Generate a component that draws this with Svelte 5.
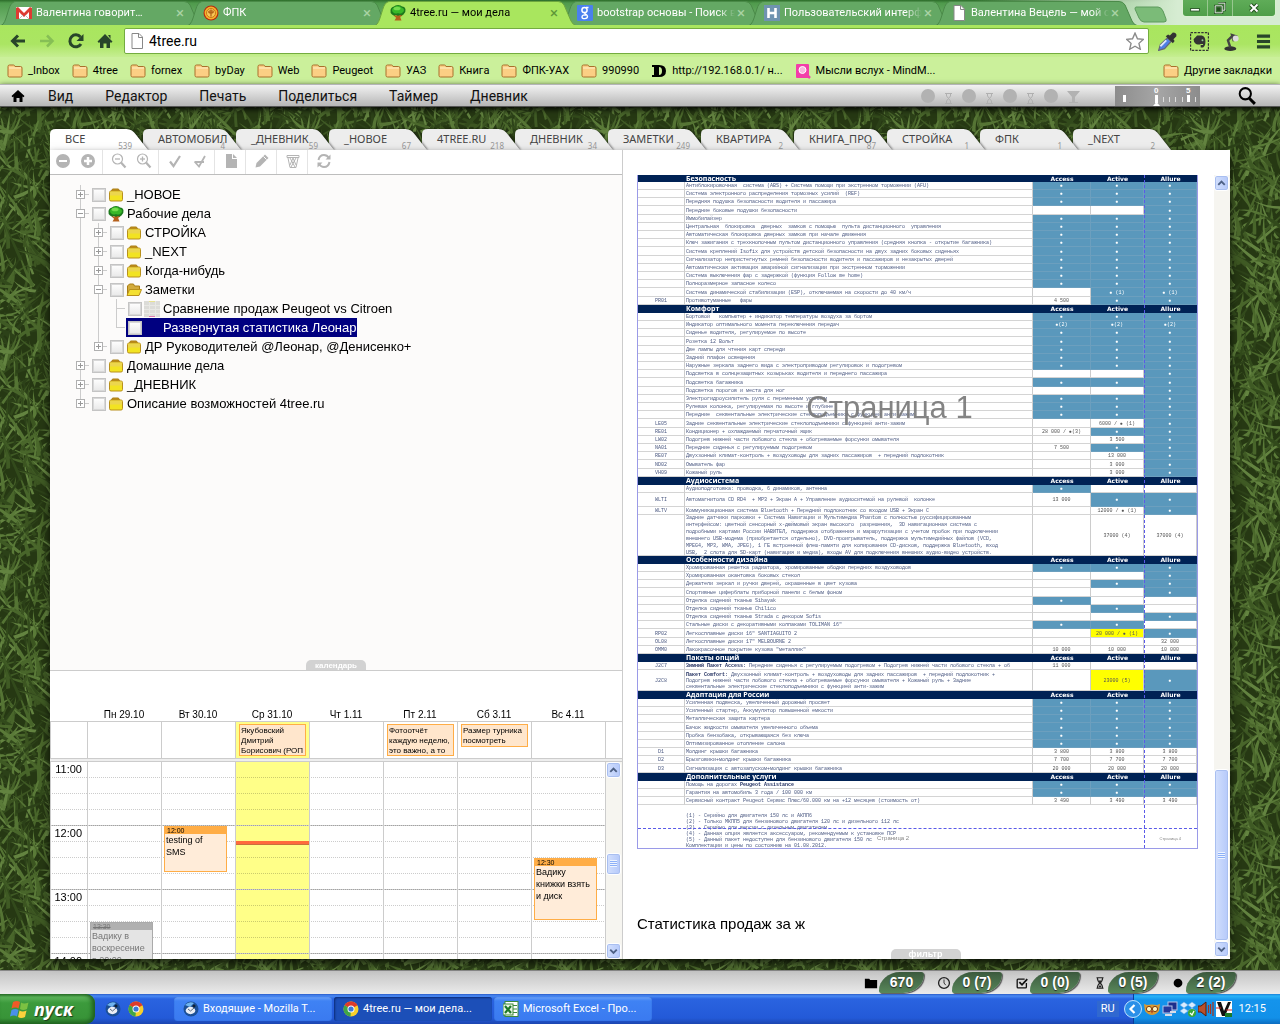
<script>
  const browserTabs = [
    { icon: 'gmail', title: 'Валентина говорит…' },
    { icon: 'coin', title: 'ФПК' },
    { icon: 'tree', title: '4tree.ru — мои дела', active: true },
    { icon: 'google', title: 'bootstrap основы - Поиск в' },
    { icon: 'habr', title: 'Пользовательский интерф' },
    { icon: 'page', title: 'Валентина Вецель — мой са' }
  ];

  const bookmarks = [
    { icon: 'folder', title: '_Inbox' },
    { icon: 'folder', title: '4tree' },
    { icon: 'folder', title: 'fornex' },
    { icon: 'folder', title: 'byDay' },
    { icon: 'folder', title: 'Web' },
    { icon: 'folder', title: 'Peugeot' },
    { icon: 'folder', title: 'УАЗ' },
    { icon: 'folder', title: 'Книга' },
    { icon: 'folder', title: 'ФПК-УАХ' },
    { icon: 'folder', title: '990990' },
    { icon: 'dlink', title: 'http://192.168.0.1/ н...' },
    { icon: 'mind', title: 'Мысли вслух - MindM...' }
  ];

  const menu = ['Вид', 'Редактор', 'Печать', 'Поделиться', 'Таймер', 'Дневник'];

  const folders = [
    ['ВСЕ', 539], ['АВТОМОБИЛ', 4], ['_ДНЕВНИК', 59], ['_НОВОЕ', 67],
    ['4TREE.RU', 218], ['ДНЕВНИК', 34], ['ЗАМЕТКИ', 249], ['КВАРТИРА', 2],
    ['КНИГА_ПРО', 87], ['СТРОЙКА', 1], ['ФПК', 1], ['_NEXT', 2]
  ];

  const tools = [['minus', 'plus'], ['zoomout', 'zoomin'], ['check', 'checkdash'], ['file'], ['pencil'], ['trash'], ['refresh']];

  const tree = [
    { depth: 0, toggle: '+', icon: 'yfolder', text: '_НОВОЕ' },
    { depth: 0, toggle: '-', icon: 'tree', text: 'Рабочие дела' },
    { depth: 1, toggle: '+', icon: 'yfolder', text: 'СТРОЙКА' },
    { depth: 1, toggle: '+', icon: 'yfolder', text: '_NEXT' },
    { depth: 1, toggle: '+', icon: 'yfolder', text: 'Когда-нибудь' },
    { depth: 1, toggle: '-', icon: 'yopen', text: 'Заметки' },
    { depth: 2, icon: 'thumb', text: 'Сравнение продаж Peugeot vs Citroen' },
    { depth: 2, icon: 'none', text: 'Развернутая статистика Леонар', selected: true, last: true },
    { depth: 1, toggle: '+', icon: 'yfolder', text: 'ДР Руководителей @Леонар, @Денисенко+', last: true },
    { depth: 0, toggle: '+', icon: 'yfolder', text: 'Домашние дела' },
    { depth: 0, toggle: '+', icon: 'yfolder', text: '_ДНЕВНИК' },
    { depth: 0, toggle: '+', icon: 'yfolder', text: 'Описание возможностей 4tree.ru', last: true }
  ];

  const slot = 16;
  const days = [
    { name: 'Пн 29.10', events: [{ at: 10, len: 4, time: '13:30', text: 'Вадику в воскресение в 20:00', done: true }] },
    { name: 'Вт 30.10', events: [{ at: 4, len: 3, time: '12:00', text: 'testing of SMS' }] },
    { name: 'Ср 31.10', today: true, allDay: 'Якубовский\nДмитрий\nБорисович (РОП', events: [] },
    { name: 'Чт 1.11', events: [] },
    { name: 'Пт 2.11', allDay: 'Фотоотчёт\nкаждую неделю,\nэто важно, а то', events: [] },
    { name: 'Сб 3.11', allDay: 'Размер турника\nпосмотреть', events: [] },
    { name: 'Вс 4.11', events: [{ at: 6, len: 4, time: '12:30', text: 'Вадику книжки взять и диск' }] }
  ];
  const hours = ['11:00', '12:00', '13:00', '14:00'];

  // Cell codes: "*" is included as standard, "" is not offered, a leading "!" marks a highlighted price.
  const sections = [
    { title: 'Безопасность', rows: [
      ['', 'Антиблокировочная  система (ABS) + Система помощи при экстренном торможении (AFU)', '*', '*', '*'],
      ['', 'Система электронного распределения тормозных усилий  (REF)', '*', '*', '*'],
      ['', 'Передняя подушка безопасности водителя и пассажира', '*', '*', '*'],
      ['', 'Передние боковые подушки безопасности', '', '', '*'],
      ['', 'Иммобилайзер', '*', '*', '*'],
      ['', 'Центральная  блокировка  дверных  замков с помощью  пульта дистанционного  управления', '*', '*', '*'],
      ['', 'Автоматическая блокировка дверных замков при начале движения', '*', '*', '*'],
      ['', 'Ключ зажигания с трехкнопочным пультом дистанционного управления (средняя кнопка - открытие багажника)', '*', '*', '*'],
      ['', 'Система креплений Isofix для устройств детской безопасности на двух задних боковых сиденьях', '*', '*', '*'],
      ['', 'Сигнализатор непристегнутых ремней безопасности водителя и пассажиров и незакрытых дверей', '*', '*', '*'],
      ['', 'Автоматическая активация аварийной сигнализации при экстренном торможении', '*', '*', '*'],
      ['', 'Система выключения фар с задержкой (функция Follow me home)', '*', '*', '*'],
      ['', 'Полноразмерное запасное колесо', '*', '*', '*'],
      ['', 'Система динамической стабилизации (ESP), отключаемая на скорости до 40 км/ч', '', '* (1)', '* (1)'],
      ['PR01', 'Противотуманные   фары', '4 500', '*', '*']
    ] },
    { title: 'Комфорт', rows: [
      ['', 'Бортовой   компьютер + индикатор температуры воздуха за бортом', '*', '*', '*'],
      ['', 'Индикатор оптимального момента переключения передач', '*(2)', '*(2)', '*(2)'],
      ['', 'Сиденье водителя, регулируемое по высоте', '*', '*', '*'],
      ['', 'Розетка 12 Вольт', '*', '*', '*'],
      ['', 'Две лампы для чтения карт спереди', '*', '*', '*'],
      ['', 'Задний плафон освещения', '*', '*', '*'],
      ['', 'Наружные зеркала заднего вида с электроприводом регулировок и подогревом', '*', '*', '*'],
      ['', 'Подсветка в солнцезащитных козырьках водителя и переднего пассажира', '', '', '*'],
      ['', 'Подсветка багажника', '*', '*', '*'],
      ['', 'Подсветка порогов и места для ног', '', '', '*'],
      ['', 'Электрогидроусилитель руля с переменным усилием', '*', '*', '*'],
      ['', 'Рулевая колонка, регулируемая по высоте и глубине', '*', '*', '*'],
      ['', 'Передние  секвентальные электрические стеклоподъемники с функцией анти-зажим', '*', '*', '*'],
      ['LE05', 'Задние секвентальные электрические стеклоподъемники с функцией анти-зажим', '', '6000 / ● (1)', '*'],
      ['RE01', 'Кондиционер + охлаждаемый перчаточный ящик', '28 000 / ●(3)', '*', '*'],
      ['LW02', 'Подогрев нижней части лобового стекла + обогреваемые форсунки омывателя', '', '3 500', '*'],
      ['NA01', 'Передние сиденья с регулируемым подогревом', '7 500', '*', '*'],
      ['RE07', 'Двухзонный климат-контроль + воздуховоды для задних пассажиров  + передний подлокотник', '', '13 000', '*'],
      ['ND02', 'Омыватель фар', '', '3 000', '*'],
      ['VH09', 'Кожаный руль', '', '3 000', '*']
    ] },
    { title: 'Аудиосистема', rows: [
      ['', 'Аудиоподготовка: проводка, 6 динамиков, антенна', '*', '', ''],
      ['WLTI', 'Автомагнитола CD RD4  + MP3 + Экран А + Управление аудиоситемой на рулевой  колонке', '13 000', '*', '*', 'mid'],
      ['WLTV', 'Коммуникационная система Bluetooth + Передний подлокотник со входом USB + Экран С', '', '12000 / ● (1)', '*'],
      ['', 'Задние датчики парковки + Система Навигации и Мультимедиа Phantom с полностью руссифицированным\nинтерфейсом: цветной сенсорный х-дюймовый экран высокого  разрешения,  3D навигационная система с\nподробными картами России НАВИТЕЛ, поддержка отображения и маршрутизации с учетом пробок при подключении\nвнешнего USB-модема (приобретается отдельно), DVD-проигрыватель, поддержка мультимедийных файлов (VCD,\nMPEG4, MP3, WMA, JPEG), 1 ГБ встроенной флеш-памяти для копирования CD-дисков, поддержка Bluetooth, вход\nUSB,  2 слота для SD-карт (навигация и медиа), входы AV для подключения внешних аудио-видео устройств.', '', '37000 (4)', '37000 (4)', 'tall']
    ] },
    { title: 'Особенности дизайна', rows: [
      ['', 'Хромированная решетка радиатора, хромированные ободки передних воздуховодов', '*', '*', '*'],
      ['', 'Хромированная окантовка боковых стекол', '', '', '*'],
      ['', 'Держатели зеркал и ручки дверей, окрашенные в цвет кузова', '', '*', '*'],
      ['', 'Спортивные циферблаты приборной панели с белым фоном', '', '', '*'],
      ['', 'Отделка сидений тканью Sibayak', '*', '', ''],
      ['', 'Отделка сидений тканью Chilico', '', '*', ''],
      ['', 'Отделка сидений тканью Strada с декором Sofis', '', '', '*'],
      ['', 'Стальные диски с декоративными колпаками TOLIMAN 16"', '*', '*', ''],
      ['RP02', 'Легкосплавные диски 16" SANTIAGUITO 2', '', '!20 000 / ● (1)', '*'],
      ['OL08', 'Легкосплавные диски 17" MELBOURNE 2', '', '', '32 000'],
      ['OMM0', 'Лакокрасочное покрытие кузова "металлик"', '10 000', '10 000', '10 000']
    ] },
    { title: 'Пакеты опций', rows: [
      ['J2C7', 'Передние сиденья с регулируемым подогревом + Подогрев нижней части лобового стекла + об', '11 000', '', '', '', 'Зимний Пакет Access: '],
      ['J2C8', 'Двухзонный климат-контроль + воздуховоды для задних пассажиров  + передний подлокотник +\nПодогрев нижней части лобового стекла + обогреваемые форсунки омывателя + Кожаный руль + Задние\nсеквентальные электрические стеклоподъемники с функцией анти-зажим', '', '!23000 (5)', '*', 'pack', 'Пакет Comfort: ']
    ] },
    { title: 'Адаптация для России', rows: [
      ['', 'Усиленная подвеска, увеличенный дорожный просвет', '*', '*', '*'],
      ['', 'Усиленный стартер, Аккумулятор повышенной емкости', '*', '*', '*'],
      ['', 'Металлическая защита картера', '*', '*', '*'],
      ['', 'Бачок жидкости омывателя увеличенного объема', '*', '*', '*'],
      ['', 'Пробка бензобака, открывающаяся без ключа', '*', '*', '*'],
      ['', 'Оптимизированное отопление салона', '*', '*', '*'],
      ['D1', 'Молдинг крышки багажника', '3 800', '3 800', '3 800'],
      ['D2', 'Брызговики+молдинг крышки багажника', '7 700', '7 700', '7 700'],
      ['D3', 'Сигнализация с автозапуском+молдинг крышки багажника', '20 000', '20 000', '20 000']
    ] },
    { title: 'Дополнительные услуги', rows: [
      ['', 'Помощь на дорогах ', '*', '*', '*', '', '', 'Peugeot Assistance'],
      ['', 'Гарантия на автомобиль 3 года / 100 000 км', '*', '*', '*'],
      ['', 'Сервисный контракт Peugeot Сервис Плюс/60.000 км на +12 месяцев (стоимость от)', '3 490', '3 490', '3 490']
    ] }
  ];

  const notes = [
    '(1) - Серийно для двигателя 150 лс и АКПП6',
    '(2) - Только МКПП5 для бензинового двигателя 120 лс и дизельного 112 лс',
    '(3) - Серийно для версии с дизельным двигателем',
    '(4) - Данная опция является аксессуаром, рекомендуемым к установке ПСР',
    '(5) - Данный пакет недоступен для бензинового двигателя 150 лс',
    'Комплектации и цены по состоянию на 01.08.2012.'
  ];

  const stats = [
    ['sfolder', '670'], ['clock', '0 (7)'], ['tick', '0 (0)'], ['glass', '0 (5)'], ['dot', '2 (2)']
  ];

  const windows = [
    { icon: 'bird', title: 'Входящие - Mozilla T...' },
    { icon: 'chrome', title: '4tree.ru — мои дела...', active: true },
    { icon: 'excel', title: 'Microsoft Excel - Про...' }
  ];

  // Grass: tapered blades in layered shades on a repeating tile.
  const tileW = 300;
  const tileH = 220;
  function makeGrass() {
    let seed = 41;
    const rnd = () => {
      seed = (seed * 16807) % 2147483647;
      return seed / 2147483647;
    };
    const shades = ['#263813', '#3c5521', '#48652a', '#2c4118', '#557434', '#3f5a24', '#638340', '#324a1b', '#5a7a38', '#4a672b'];
    const layers = [];
    for (let l = 0; l < 30; l++) {
      let d = '';
      for (let i = 0; i < 40; i++) {
        const x = rnd() * tileW;
        const y = rnd() * tileH;
        const a = -Math.PI / 2 + (rnd() - 0.5) * 2.8;
        const len = 20 + rnd() * 26;
        const bend = (rnd() - 0.5) * 14;
        const w = 1 + rnd();
        const nx = -Math.sin(a);
        const ny = Math.cos(a);
        const tx = x + Math.cos(a) * len;
        const ty = y + Math.sin(a) * len;
        const cx = (x + tx) / 2 + nx * bend;
        const cy = (y + ty) / 2 + ny * bend;
        const p = (u, v) => u.toFixed(1) + ' ' + v.toFixed(1);
        d += `M${p(x - nx * w, y - ny * w)}Q${p(cx - nx * w, cy - ny * w)} ${p(tx, ty)}Q${p(cx + nx * w, cy + ny * w)} ${p(x + nx * w, y + ny * w)}Z`;
      }
      layers.push({ d, fill: shades[l % shades.length] });
    }
    return layers;
  }
  const grass = makeGrass();
  const wraps = [-1, 0, 1].flatMap((i) => [-1, 0, 1].map((j) => [i * tileW, j * tileH]));

  let address = $state('4tree.ru');
</script>

{#snippet icon(name)}
  <svg class="ico" viewBox="0 0 16 16" aria-hidden="true">
    {#if name === 'gmail'}
      <rect x="0" y="2" width="16" height="12" rx="1" fill="#fff" />
      <path d="M0 14V3l2-1 6 6 6-6 2 1v11h-3V7l-5 5-5-5v7z" fill="#dd3b32" />
      <path d="M3 14l4-4M13 14l-4-4" stroke="#bbb" />
    {:else if name === 'coin'}
      <circle cx="8" cy="8" r="7.5" fill="#b8270f" /><circle cx="8" cy="8" r="6.4" fill="#f6b32b" />
      <circle cx="8" cy="8" r="4.5" fill="#f8c858" stroke="#c9761a" /><path d="M8 4.500v7M6 6h4q1 2-2 2-3 0-2-2" fill="none" stroke="#b05c14" stroke-width="1.200" />
    {:else if name === 'tree'}
      <path d="M6.500 9h3l1 4 1 2.500h-7l1.500-2.500z" fill="#b5601c" /><path d="M4 10l3 2.500 5-2.500" fill="none" stroke="#b5601c" stroke-width="1.500" />
      <path d="M8 0q3 0 4 1.500 3 0 3.500 3t-2 5q-2 1.500-3.500.5-2 1.500-4 0-2 1-4-.5T.5 5q.5-3 3.500-3.500Q5 0 8 0z" fill="#1c7a1c" />
      <path d="M7.500.8q3 0 4 1.700 2.500.5 2.500 2.500T12 8q-2 1-4 0-2 1-4 0T2 5q0-2 2.500-2.500Q5 .8 7.500.8z" fill="#38b828" />
      <ellipse cx="7" cy="3.500" rx="3.500" ry="1.800" fill="#74dc4e" />
    {:else if name === 'google'}
      <rect width="16" height="16" rx="1" fill="#4a80ee" />
      <circle cx="7.500" cy="5" r="2.600" fill="none" stroke="#fff" stroke-width="1.500" />
      <path d="M9 2.500h2.500M8.500 7.500C6 9 10.500 9 10.500 11.500S5 14.500 5 12s3-2 4-2" fill="none" stroke="#fff" stroke-width="1.400" />
    {:else if name === 'habr'}
      <rect width="16" height="16" fill="#6f93b0" /><path d="M4.500 3v10M11.500 3v10M5 8h6" stroke="#fff" stroke-width="2.600" />
    {:else if name === 'page'}
      <path d="M3 .5h7l3.500 3.500v11.500H3z" fill="#fff" stroke="#888" /><path d="M9.500 1v3.500H13" fill="none" stroke="#888" />
    {:else if name === 'folder'}
      <path d="M1 3.500q0-1.500 1.500-1.500h4q1 0 1.500 1.500h5.500q1.500 0 1.500 1.500v7.500q0 1.500-1.500 1.500h-11Q1 14 1 12.500z" fill="#fbcf84" stroke="#a9702c" />
      <path d="M2 5h12" stroke="#fff0c8" />
    {:else if name === 'dlink'}
      <path d="M1 2h7q7 0 7 6t-7 6H1v-2h2V4H1zm7 2v8q3 0 3-4T8 4z" fill="#000" fill-rule="evenodd" />
    {:else if name === 'mind'}
      <rect x="1" y="1" width="13" height="14" rx="1" fill="#f33ea9" /><circle cx="7.500" cy="7" r="3.500" fill="#f9b6de" stroke="#fff" /><path d="M10 10l5 5" stroke="#f33ea9" stroke-width="2.500" />
    {:else if name === 'yfolder'}
      <path d="M3.500 4l1-2h6l1 2z" fill="#c8931a" stroke="#a87c14" /><rect x="1.500" y="4" width="13" height="10" rx="1.500" fill="#f2e322" stroke="#b8901c" />
      <rect x="2" y="4.500" width="12" height="4" fill="#ead25a" opacity=".8" />
    {:else if name === 'yopen'}
      <path d="M1.500 13V4l2-2h4l1 2h5v3" fill="#d2ab3c" stroke="#a87c14" /><path d="M1 13.500l2.500-6h12l-2.500 6z" fill="#f4e032" stroke="#b8901c" />
    {:else if name === 'thumb'}
      <rect x="0" y="0" width="16" height="16" fill="#dcdcd8" /><path d="M0 4.500h16M0 8.500h16M0 12.500h16M5.500 0v16M11.500 0v16" stroke="#e8e8e4" /><path d="M5 .5h6" stroke="#e8e290" /><path d="M5 15.500h6" stroke="#e07ab0" />
    {:else if name === 'minus'}
      <circle cx="8" cy="8" r="7" fill="#b4b4b4" /><path d="M4 8h8" stroke="#fff" stroke-width="2" />
    {:else if name === 'plus'}
      <circle cx="8" cy="8" r="7" fill="#b4b4b4" /><path d="M4 8h8M8 4v8" stroke="#fff" stroke-width="2.500" />
    {:else if name === 'zoomout' || name === 'zoomin'}
      <circle cx="6.500" cy="6" r="5" fill="none" stroke="#b4b4b4" stroke-width="1.200" /><path d="M4 6h5" stroke="#b4b4b4" stroke-width="1.300" />
      {#if name === 'zoomin'}<path d="M6.500 3.500v5" stroke="#b4b4b4" stroke-width="1.300" />{/if}
      <path d="M10 9.500l4.500 5" stroke="#b4b4b4" stroke-width="2.200" />
    {:else if name === 'check'}
      <path d="M3 8.500l3.500 4.500L13 3" fill="none" stroke="#b4b4b4" stroke-width="2.200" />
    {:else if name === 'checkdash'}
      <path d="M2.500 8.500l4.500 5L13 3M3 9h9" fill="none" stroke="#b4b4b4" stroke-width="1.800" />
    {:else if name === 'file'}
      <path d="M3 1h6v5h5v9H3z" fill="#b4b4b4" /><path d="M10 1l4 4h-4z" fill="#b4b4b4" />
    {:else if name === 'pencil'}
      <path d="M1.500 14.500l1-4.500 8.500-8.500 3.500 3.500L6 13.500z" fill="#b4b4b4" /><path d="M9.500 3.500l3 3" stroke="#fff" />
    {:else if name === 'trash'}
      <path d="M2 2.500h12v2H2z" fill="none" stroke="#b4b4b4" /><path d="M3 5l2 9.500h6L13 5M5 5l5 9M8 5l3 7M11 5l-5 9M8 5l-3 7" fill="none" stroke="#b4b4b4" />
    {:else if name === 'refresh'}
      <path d="M2.500 7q1-5 5.500-5 3 0 5 3M13.500 9q-1 5-5.500 5-3 0-5-3" fill="none" stroke="#b4b4b4" stroke-width="2" /><path d="M14.500 1.500v5h-5zM1.500 14.500v-5h5z" fill="#b4b4b4" />
    {:else if name === 'back'}
      <path d="M15 8H3M8 2.500L2.500 8 8 13.500" fill="none" stroke="#28452a" stroke-width="3" />
    {:else if name === 'forward'}
      <path d="M1 8h12M8 2.500L13.500 8 8 13.500" fill="none" stroke="#86bf55" stroke-width="2.500" />
    {:else if name === 'reload'}
      <path d="M13 11a6 6 0 1 1-.5-7" fill="none" stroke="#28452a" stroke-width="3" /><path d="M15.500 1v7h-7z" fill="#28452a" />
    {:else if name === 'home'}
      <path d="M8 1l7.500 7.500-1.500 1.500-1-1V15H9.500v-4.500h-3V15H3V9l-1 1L.5 8.500z" fill="#28452a" /><path d="M11 2h2.500v4z" fill="#28452a" />
    {:else if name === 'homeblack'}
      <path d="M8 2l6.500 6-1 1.200-1-.8V14H9.500v-4h-3v4h-3V8.400l-1 .8L1.500 8z" fill="#000" />
    {:else if name === 'star'}
      <path d="M8 1l2.200 5 5.300.5-4 3.600 1.200 5.200L8 12.600l-4.700 2.700 1.200-5.200-4-3.600L5.800 6z" fill="#fff" stroke="#8a8a8a" stroke-width="1.200" />
    {:else if name === 'dropper'}
      <path d="M.5 15.500l1.500-5 6-5.500 3 3-5.500 6z" fill="#4f7fe6" stroke="#667" /><path d="M2 12l5-5" stroke="#dfe9fb" stroke-width="1.500" /><path d="M6.500 3.500l6 6 1.500-2-1-1.500 2.500-2.500q.5-3-3-3l-2.500 2.500-1.500-1z" fill="#333" />
    {:else if name === 'evernote'}
      <rect x=".5" y=".5" width="15" height="15" fill="none" stroke="#333" stroke-dasharray="2 1" /><path d="M3 6l3-3 4 0q3 1 3 5t-2 5H9v-2h2v-1H9q-1 1-4 0-2-1-2-4z" fill="#333" /><circle cx="10.500" cy="7" r=".8" fill="#9c9" />
    {:else if name === 'lamp'}
      <ellipse cx="7" cy="14" rx="5" ry="2" fill="#333" /><path d="M7 13L5 7l4-4" fill="none" stroke="#444" stroke-width="2" /><path d="M7 1l6 2v4L9 8z" fill="#444" /><circle cx="11.500" cy="5.500" r="2.500" fill="#ddd" />
    {:else if name === 'burger'}
      <path d="M2.500 3.500h11M2.500 8h11M2.500 12.500h11" stroke="#28452a" stroke-width="2.600" />
    {:else if name === 'search'}
      <circle cx="6.500" cy="6" r="5" fill="none" stroke="#000" stroke-width="1.800" /><path d="M10 10l5 5" stroke="#000" stroke-width="2.600" />
    {:else if name === 'sfolder'}
      <path d="M1 3h5l1 1.500h8V14H1z" fill="#000" />
    {:else if name === 'clock'}
      <circle cx="8" cy="8" r="6.200" fill="none" stroke="#222" stroke-width="1.500" /><path d="M8 4v4l2 2.500" fill="none" stroke="#222" />
    {:else if name === 'tick'}
      <path d="M13 8v4.500q0 1-1 1H3.500q-1 0-1-1v-8q0-1 1-1H11" fill="none" stroke="#111" stroke-width="1.500" /><path d="M5 7l3 3 6-6.500" fill="none" stroke="#111" stroke-width="2" />
    {:else if name === 'glass'}
      <path d="M4 2h8M4 14h8M5 2q0 4 3 6-3 2-3 6M11 2q0 4-3 6 3 2 3 6" fill="none" stroke="#222" stroke-width="1.300" /><path d="M6 13l2-3 2 3zM6 5h4L8 8z" fill="#222" />
    {:else if name === 'dot'}
      <circle cx="8" cy="8" r="5" fill="#000" />
    {:else if name === 'bird'}
      <circle cx="8" cy="8" r="7.500" fill="#1b4f96" /><path d="M2 4q4-4 9-2l-4 4z" fill="#6fb4ee" /><ellipse cx="7.500" cy="9.500" rx="4.800" ry="3.700" fill="#e9edf4" /><path d="M5 8l2.500 2L11 7" fill="none" stroke="#57687e" /><circle cx="11" cy="5" r="1.500" fill="#123" />
    {:else if name === 'chrome'}
      <circle cx="8" cy="8" r="7.500" fill="#f7cf2c" /><path d="M8 8L1.500 4.200A7.500 7.500 0 0 1 14.500 4.200z" fill="#dd3b2b" /><path d="M8 8L1.500 4.200A7.500 7.500 0 0 0 7.500 15.500z" fill="#3fa548" />
      <circle cx="8" cy="8" r="3.500" fill="#fff" /><circle cx="8" cy="8" r="2.600" fill="#3a78d8" />
    {:else if name === 'excel'}
      <rect x="2" y=".5" width="13" height="15" fill="#fff" stroke="#3c8a3c" /><path d="M10 4.500h4M10 8h4M10 11.500h4" stroke="#3c8a3c" /><rect x="0" y="3" width="10" height="11" fill="#e9f5e4" stroke="#3c8a3c" /><path d="M2 5l6 7M8 5l-6 7" stroke="#1f7a28" stroke-width="2.200" />
    {:else if name === 'owl'}
      <path d="M0 3l3 1q5-1 10 0l3-1-1 7q-3 4-7 4t-7-4z" fill="#d99a32" /><circle cx="5" cy="8" r="2.600" fill="#fff3c0" stroke="#7c3f10" /><circle cx="11" cy="8" r="2.600" fill="#fff3c0" stroke="#7c3f10" /><path d="M7 10l1 3 1-3z" fill="#a32" />
    {:else if name === 'net'}
      <rect x="6" y="1" width="9" height="8" fill="#1c2f8c" stroke="#b8c4e8" /><rect x="1" y="5" width="9" height="7" fill="#24389c" stroke="#b8c4e8" /><path d="M3 14h7M8 11h6" stroke="#d8dce8" stroke-width="2" />
    {:else if name === 'box'}
      <path d="M4 1l4 3-4 3-4-3zM12 1l4 3-4 3-4-3zM4 7l4 3-4 3-4-3zM12 7l4 3-4 3-4-3z" fill="#d8ecff" stroke="#6aa8e0" stroke-width=".5" /><circle cx="12" cy="12" r="4" fill="#38a838" /><path d="M10 12l2 2 2-4" fill="none" stroke="#fff" stroke-width="1.300" />
    {:else if name === 'sound'}
      <path d="M0 5h3l5-4v14l-5-4H0z" fill="#b8502c" stroke="#5c1c08" /><path d="M10.500 4v8M12.500 3v10M15 1v14" stroke="#a8341c" stroke-width="1.200" />
    {:else if name === 'vnc'}
      <rect width="16" height="16" fill="#fff" /><path d="M1 1l5 14h3L15 1h-3L8 10 5 1z" fill="#111" /><path d="M0 7h5M10 9h6" stroke="#c22" /><rect x="9" y="12" width="7" height="4" fill="#1a7a2a" />
    {/if}
  </svg>
{/snippet}

{#snippet scrollbar(before, size, after)}
  <div class="scroll">
    <button class="arrow" aria-label="Вверх"><svg viewBox="0 0 14 14"><path d="M3.500 9L7 5.500 10.500 9" /></svg></button>
    <div class="track" style:flex-grow={before}></div>
    <div class="thumb" style:flex-grow={size}><i></i></div>
    <div class="track" style:flex-grow={after}></div>
    <button class="arrow" aria-label="Вниз"><svg viewBox="0 0 14 14"><path d="M3.500 5.500L7 9l3.500-3.500" /></svg></button>
  </div>
{/snippet}

{#snippet option(value)}
  {@const std = value.startsWith('*')}
  {@const hot = value.startsWith('!')}
  <td class="opt" class:std class:hot>{std ? '●' + value.slice(1) : hot ? value.slice(1) : value}</td>
{/snippet}

<div class="screen">
  <div class="strip">
    <div class="btabs">
      {#each browserTabs as tab}
        <div class="btab" class:active={tab.active}>
          <svg class="shape" viewBox="0 0 202 24" preserveAspectRatio="none" aria-hidden="true"><path d="M0 24.500C6 23 7 3 12 1.500Q13 .5 15 .5H184Q188 .5 190 4L197 20Q199 24 202 24.500" /></svg>
          <a href="#tab">{@render icon(tab.icon)}<span>{tab.title}</span></a>
          <button aria-label="Закрыть вкладку">×</button>
        </div>
      {/each}
      <button class="newtab" aria-label="Новая вкладка"><svg viewBox="0 0 34 17"><path d="M2 1H24Q27 1 29 5L32 13Q33 16 30 16H10Q7 16 5 12L1 3Q1 1 2 1z" fill="#7bbb78" stroke="#5d9a5c" /></svg></button>
    </div>
    <div class="wbuttons">
      <button aria-label="Свернуть"><svg viewBox="0 0 16 16"><rect x="3" y="8.500" width="10" height="3" fill="#fff" stroke="#24501f" /></svg></button>
      <button aria-label="Развернуть"><svg viewBox="0 0 16 16"><path d="M6 2.500h7.500v8H11M2.500 5.500h8v8h-8zM5.500 8.500h2v2h-2z" fill="none" stroke="#24501f" stroke-width="2.500" /><path d="M6 2.500h7.500v8H11M2.500 5.500h8v8h-8z" fill="none" stroke="#fff" /></svg></button>
      <button class="close" aria-label="Закрыть"><svg viewBox="0 0 16 16"><path d="M4 4l8 8M12 4l-8 8" stroke="#24501f" stroke-width="4.500" /><path d="M4 4l8 8M12 4l-8 8" stroke="#fff" stroke-width="2.200" /></svg></button>
    </div>
  </div>

  <div class="toolbar">
    <button aria-label="Назад">{@render icon('back')}</button>
    <button aria-label="Вперёд">{@render icon('forward')}</button>
    <button aria-label="Обновить">{@render icon('reload')}</button>
    <button aria-label="Домой">{@render icon('home')}</button>
    <label class="omnibox">
      {@render icon('page')}
      <input type="text" bind:value={address} aria-label="Адрес" />
      {@render icon('star')}
    </label>
    <button class="ext" aria-label="Пипетка">{@render icon('dropper')}</button>
    <button class="ext" aria-label="Evernote">{@render icon('evernote')}</button>
    <button class="ext" aria-label="Лампа">{@render icon('lamp')}</button>
    <button class="ext" aria-label="Меню">{@render icon('burger')}</button>
  </div>

  <nav class="bookmarks">
    {#each bookmarks as mark}
      <a href="#mark">{@render icon(mark.icon)}<span>{mark.title}</span></a>
    {/each}
    <a class="other" href="#other">{@render icon('folder')}<span>Другие закладки</span></a>
  </nav>

  <header class="menubar">
    <a class="homelink" href="#home" aria-label="Главная">{@render icon('homeblack')}</a>
    <nav class="menu">{#each menu as item}<a href="#menu">{item}</a>{/each}</nav>
    <svg class="pomodoro" viewBox="0 0 162 20" aria-hidden="true">
      {#each [0, 1, 2, 3] as n}
        <circle cx={8 + n * 41} cy="10" r="7" fill="#b2b2b2" />
      {/each}
      {#each [0, 1, 2] as n}
        <g transform="translate({25 + n * 41} 7)"><path d="M0 .5h7M0 10.500h7M1.500 1v2l2 2.500-2 2.500v2M5.500 1v2l-2 2.500 2 2.500v2" fill="none" stroke="#b0b0b0" /></g>
      {/each}
      <path d="M147 5h13l-5 6v5h3v1h-9v-1h3v-5z" fill="#b2b2b2" />
    </svg>
    <div class="ruler">
      <svg viewBox="0 0 85 20" aria-hidden="true">
        <path d="M9.500 9v7M41.500 9v8M73.500 9v7" stroke="#fff" stroke-width="3" />
        <path d="M48.500 11v5M54.500 11v5M60.500 11v5M67.500 11v5M80.500 11v5" stroke="#ddd" />
        <path d="M38 20l3.500-4 3.500 4z" fill="#fff" />
        <text x="39" y="7">0</text><text x="71" y="7">5</text>
      </svg>
    </div>
    <button class="find" aria-label="Поиск">{@render icon('search')}</button>
  </header>

  <main>
    <svg class="grass" aria-hidden="true">
      <defs>
        <g id="blades">{#each grass as layer}<path d={layer.d} fill={layer.fill} />{/each}</g>
        <pattern id="lawn" width={tileW} height={tileH} patternUnits="userSpaceOnUse">
          <rect width={tileW} height={tileH} fill="#263813" />
          {#each wraps as w}<use href="#blades" x={w[0]} y={w[1]} />{/each}
        </pattern>
      </defs>
      <rect width="100%" height="100%" fill="url(#lawn)" />
    </svg>
    <nav class="ftabs">
      {#each folders as f, i}
        <a href="#folder" class:current={i === 0} style:z-index={20 - i}>
          <svg class="shape" viewBox="0 0 101 21" preserveAspectRatio="none" aria-hidden="true"><path d="M0 21V5Q0 0 6 0H78Q84 0 88 6L100 21z" /></svg>
          <span>{f[0]}</span><small>{f[1]}</small>
        </a>
      {/each}
    </nav>
    <div class="panel">
      <section class="left">
        <div class="tools">
          {#each tools as group}
            <div class="group">{#each group as t}<button aria-label={t}>{@render icon(t)}</button>{/each}</div>
          {/each}
        </div>
        <div class="treebox">
          <ul class="tree">
            {#each tree as row}
              <li>
                {#each Array(row.depth) as _}<span class="guide"></span>{/each}
                <span class="guide stub" class:last={row.last}>
                  {#if row.toggle}
                    <button class="toggle" aria-label="Раскрыть"><svg viewBox="0 0 9 9"><path d={row.toggle === '+' ? 'M2 4.500h5M4.500 2v5' : 'M2 4.500h5'} /></svg></button>
                  {/if}
                </span>
                <label class:selected={row.selected}><input type="checkbox" />{@render icon(row.icon)}<span>{row.text}</span></label>
              </li>
            {/each}
          </ul>
          <button class="handle">календарь</button>
        </div>
        <div class="calendar">
          <div class="cgrid heads">
            <div></div>
            {#each days as day}<div>{day.name}</div>{/each}
            <div></div>
          </div>
          <div class="cgrid allday">
            <div class="cell"></div>
            {#each days as day}
              <div class="cell" class:today={day.today}>{#if day.allDay}<div class="note">{day.allDay}</div>{/if}</div>
            {/each}
            <div class="cell"></div>
          </div>
          <div class="cgrid times">
            <div class="hours">{#each hours as h}<div>{h}</div>{/each}</div>
            {#each days as day}
              <div class="day" class:today={day.today}>
                {#if day.today}<div class="now"></div>{/if}
                {#each day.events as ev}
                  <div class="event" class:done={ev.done} style:top="{ev.at * slot}px" style:height="{ev.len * slot - 2}px">
                    <b>{ev.time}</b><p>{ev.text}</p>
                  </div>
                {/each}
              </div>
            {/each}
            {@render scrollbar(77, 20, 70)}
          </div>
        </div>
      </section>
      <section class="right">
        <article>
          <div class="sheet">
            <table>
              <colgroup><col class="c1" /><col /><col class="c3" /><col class="c4" /><col class="c5" /></colgroup>
              {#each sections as s}
                <tbody>
                  <tr class="head"><th></th><th class="title">{s.title}</th><th>Access</th><th>Active</th><th>Allure</th></tr>
                  {#each s.rows as r}
                    <tr class={r[5]}>
                      <td class="code">{r[0]}</td>
                      <td class="desc"><div>{#if r[6]}<b>{r[6]}</b>{/if}{r[1]}{#if r[7]}<b>{r[7]}</b>{/if}</div></td>
                      {@render option(r[2])}{@render option(r[3])}{@render option(r[4])}
                    </tr>
                  {/each}
                </tbody>
              {/each}
            </table>
            <div class="footnotes">{#each notes as n}<p>{n}</p>{/each}</div>
            <div class="mark one">Страница 1</div>
            <div class="mark two">Страница 2</div>
            <div class="mark four">Страница 4</div>
            <div class="break across"></div>
            <div class="break down"></div>
          </div>
          <p class="caption">Статистика продаж за ж</p>
        </article>
        {@render scrollbar(578, 170, 0)}
        <button class="handle wide">фильтр</button>
      </section>
    </div>
  </main>

  <footer class="stats">
    {#each stats as s}
      <div class="stat">{@render icon(s[0])}<span>{s[1]}</span></div>
    {/each}
  </footer>

  <div class="taskbar">
    <button class="start">
      <svg viewBox="0 0 20 20" aria-hidden="true"><path d="M3 3q4-2 7 0l-1.500 6.500q-3-2-7 0z" fill="#f05a28" /><path d="M11 3.500q3 2 7.500 0L17 10q-4 2-7 0z" fill="#7cc142" /><path d="M1.500 11q4-2 7 0L7 17.500q-3-2-7 0z" fill="#4a90ea" /><path d="M9.500 11.500q3 2 7 0L15 18q-4 2-7 0z" fill="#fbd13c" /></svg>
      <span>пуск</span>
    </button>
    <div class="quick"><button aria-label="Thunderbird">{@render icon('bird')}</button><button aria-label="Chrome">{@render icon('chrome')}</button></div>
    {#each windows as w}
      <button class="win" class:active={w.active}>{@render icon(w.icon)}<span>{w.title}</span></button>
    {/each}
    <span class="lang">RU</span>
    <div class="tray">
      <button class="expand" aria-label="Показать значки"><svg viewBox="0 0 18 18"><circle cx="9" cy="9" r="8.500" fill="#2a8fe8" stroke="#bfe2ff" /><path d="M10.500 5L6.500 9l4 4" fill="none" stroke="#fff" stroke-width="2.200" /></svg></button>
      {#each ['owl', 'net', 'box', 'sound', 'vnc'] as t}{@render icon(t)}{/each}
      <time>12:15</time>
    </div>
  </div>
</div>

<style>
  :global(body) { margin: 0; overflow: hidden; }
  .screen { display: flex; flex-direction: column; height: 100vh; font: 12px/16px "Noto Sans", "Open Sans", sans-serif; color: #000; }
  .screen :global(*) { box-sizing: border-box; }
  button { border: 0; padding: 0; margin: 0; background: none; font: inherit; color: inherit; display: block; }
  a { color: inherit; text-decoration: none; }
  p { margin: 0; }
  .ico { width: 16px; height: 16px; flex: none; display: block; }

  .strip { height: 25px; flex: none; display: flex; justify-content: space-between; background: linear-gradient(90deg, transparent 76%, #d6ecd2 92%), linear-gradient(#2c6c2a, #4f9a4c 3px, #78b974); }
  .btabs { display: flex; flex: 1; min-width: 0; padding: 1px 0 0 1px; align-items: stretch; }
  .btab { position: relative; flex: 0 1 187px; min-width: 0; display: flex; align-items: center; padding: 0 0 0 15px; color: #fff; font: 11px/16px Roboto, sans-serif; }
  .btab a { position: relative; display: flex; align-items: center; gap: 4px; width: 158px; min-width: 0; white-space: nowrap; }
  .btab a span { flex: 1; min-width: 0; overflow: hidden; -webkit-mask-image: linear-gradient(90deg, #000 88%, transparent); mask-image: linear-gradient(90deg, #000 88%, transparent); }
  .btab button { position: relative; width: 12px; color: #a9d3a4; font-size: 15px; }
  .shape { position: absolute; left: 0; top: 0; height: 100%; }
  .btab .shape { width: calc(100% + 14px); }
  .btab .shape path { fill: #64a864; stroke: #4a8a48; }
  .btab.active { color: #000; z-index: 2; }
  .btab.active .shape path { fill: #a9e65e; stroke: #6da63e; }
  .btab.active button { color: #5e9638; }
  .newtab { width: 34px; margin: 5px 0 0 11px; align-self: flex-start; }
  .newtab svg { display: block; width: 34px; height: 17px; }
  .wbuttons { display: flex; height: 17px; margin-right: 4px; border: 1px solid #d8f0d0; border-top: 0; border-radius: 0 0 4px 4px; background: linear-gradient(#5fac58, #4f9e49); }
  .wbuttons button { width: 25px; display: flex; justify-content: center; align-items: center; border-right: 1px solid #98c890; }
  .wbuttons .close { width: 42px; border: 0; }
  .wbuttons svg { width: 14px; height: 14px; }

  .toolbar { height: 32px; flex: none; display: flex; align-items: center; padding: 0 1px 0 3px; background: linear-gradient(#a9e65e, #abe563 60%, #c6ee92); }
  .toolbar > button { width: 29px; height: 28px; display: flex; align-items: center; justify-content: center; }
  .toolbar > .ext { width: 32px; }
  .toolbar > .ext .ico { width: 19px; height: 19px; }
  .omnibox { flex: 1; display: flex; align-items: center; height: 26px; margin: 3px 2px 3px 5px; padding: 0 4px; background: #fff; border: 1px solid #74ac40; border-radius: 2px; }
  .omnibox input { flex: 1; min-width: 0; border: 0; outline: 0; background: none; padding: 0 4px; font: 14px/20px Roboto, sans-serif; color: #000; }
  .omnibox .ico:last-child { width: 18px; height: 18px; }

  .bookmarks { height: 27px; flex: none; display: flex; align-items: center; gap: 12px; padding: 0 8px 0 7px; background: #cbf09b; font: 11px/16px Roboto, sans-serif; white-space: nowrap; }
  .bookmarks a { display: flex; align-items: center; gap: 5px; }
  .bookmarks .other { margin-left: auto; }

  .menubar { height: 23px; flex: none; display: flex; align-items: center; gap: 33px; padding: 0 24px 0 10px; position: relative; z-index: 3; background: linear-gradient(#f2f2f2, #b6b6b6); border-top: 1px solid #b4b4b8; border-bottom: 1px solid #555; box-shadow: 0 2px 6px #000; font: 14px/20px Roboto, sans-serif; color: #111; }
  .menu { display: flex; gap: 32px; }
  .homelink { margin-right: -11px; }
  .pomodoro { width: 162px; height: 20px; margin-left: auto; }
  .ruler { width: 85px; height: 20px; background: linear-gradient(90deg, #8c8c8c, #a6a6a6 50%, #8c8c8c); }
  .ruler svg { display: block; width: 85px; height: 20px; }
  .ruler text { font: bold 8px "Liberation Sans", sans-serif; fill: #fff; }
  .find { margin-left: 5px; }
  .find .ico { width: 18px; height: 18px; }

  main { flex: 1; min-height: 0; position: relative; display: flex; flex-direction: column; padding: 22px 50px 11px; }
  .grass { position: absolute; inset: 0; width: 100%; height: 100%; }
  .ftabs { display: flex; height: 21px; position: relative; flex: none; }
  .ftabs a { flex: 0 1 93px; min-width: 0; position: relative; padding: 2px 0 0 15px; font: 11px/16px "Noto Sans", sans-serif; color: #444; }
  .ftabs .shape { width: calc(100% + 6px); filter: drop-shadow(1px 0 1px #0008); overflow: visible; }
  .ftabs .shape path { fill: #ededed; }
  .ftabs .current .shape path { fill: #fff; }
  .ftabs span { position: relative; }
  .ftabs small { position: absolute; right: 11px; bottom: 0; font: 8px/8px "Noto Sans", sans-serif; color: #999; }

  .panel { flex: 1; min-height: 0; position: relative; z-index: 30; display: grid; grid-template-columns: minmax(0, 572fr) minmax(0, 608fr); background: #fff; box-shadow: 0 4px 8px #000b; }
  .left { display: flex; flex-direction: column; min-height: 0; }
  .tools { height: 25px; flex: none; display: flex; border-bottom: 1px solid #bdbdbd; }
  .group { display: flex; padding: 0 2px 2px 3px; border-right: 1px solid #e4e4e4; }
  .group:first-child { padding-left: 0; }
  .group:last-child { border: 0; }
  .group button { width: 25px; display: flex; align-items: center; justify-content: center; }

  .treebox { flex: 1; min-height: 0; display: flex; flex-direction: column; justify-content: space-between; background: #fcfbfa; }
  .tree { list-style: none; margin: 0; padding: 10px 0 0 26px; font: 13px/19px "Liberation Sans", Arial, sans-serif; }
  .tree li { display: flex; height: 19px; }
  .guide { width: 18px; flex: none; background: linear-gradient(#ccc, #ccc) 4px 0 / 1px 100% no-repeat; }
  .stub { width: 16px; padding-top: 5px; background: linear-gradient(#ccc, #ccc) 4px 0 / 1px 100% no-repeat, linear-gradient(#ccc, #ccc) 4px 9px / 9px 1px no-repeat; }
  .stub.last { background-size: 1px 10px, 9px 1px; }
  .toggle { width: 9px; height: 9px; background: #fff; border: 1px solid #b0b0b0; }
  .toggle svg { display: block; width: 9px; height: 9px; margin: -1px; }
  .toggle path { stroke: #999; fill: none; }
  .tree label { display: flex; align-items: center; gap: 2px; white-space: nowrap; }
  .tree label span { padding-left: 1px; }
  .tree label.selected { background: #000080; color: #fff; box-shadow: -2px 0 #000080; }
  .tree input { appearance: none; width: 14px; height: 14px; margin: 0; border: 1px solid #c4c4c4; background: linear-gradient(#fff, #e8e8e8); box-shadow: inset 0 0 0 1px #d8d8d8; }
  .handle { align-self: center; width: 60px; height: 10px; border-radius: 5px 5px 0 0; background: #d2d2d2; color: #fff; font: bold 9px/9px "Liberation Sans", Arial, sans-serif; text-align: center; }
  .treebox .handle { font-size: 8px; }

  .calendar { flex: none; border-top: 1px solid #ccc; background: #fff; font-family: "Liberation Sans", Arial, sans-serif; }
  .cgrid { display: grid; grid-template-columns: 38px repeat(7, minmax(0, 1fr)) 16px; }
  .heads { padding-top: 37px; font-size: 10px; line-height: 13px; text-align: center; }
  .heads div { padding-right: 2px; }
  .allday { height: 37px; border-top: 1px solid #ccc; }
  .cell { border-right: 1px solid #ccc; padding: 2px 3px; min-width: 0; }
  .cell:first-child { border-left: 1px solid #ccc; }
  .cell:last-child { border: 0; }
  .today { background: #ffff88; }
  .note { max-height: 32px; overflow: hidden; border: 1px solid #ffad46; background: #ffe6cc; padding: 1px 1px 0; font-size: 8px; line-height: 10px; white-space: pre; color: #000; }
  .times { grid-template-rows: minmax(0, 1fr); border-top: 1px solid #ccc; height: 201px; overflow: hidden; padding-top: 3px; background: linear-gradient(#eee, #eee) 0 0 / 100% 2px no-repeat, linear-gradient(#ccc, #ccc) 0 2px / 100% 1px no-repeat; }
  .hours, .day { position: relative; border-right: 1px solid #ccc; min-width: 0; background-image: repeating-linear-gradient(transparent 0 63px, #ccc 63px 64px); }
  .hours { border-left: 1px solid #ccc; }
  .day::before, .hours::before { content: ""; position: absolute; inset: 0; background: repeating-linear-gradient(90deg, #fff 0 1px, transparent 1px 2px), repeating-linear-gradient(transparent 0 15px, #999 15px 16px); mix-blend-mode: multiply; opacity: .5; }
  .hours div { height: 64px; text-align: right; padding: 0 5px 0 0; font-size: 11px; line-height: 15px; position: relative; }
  .event { position: absolute; left: 2px; right: 8px; border: 1px solid #ffad46; background: #ffecd9; overflow: hidden; font-size: 9px; line-height: 12px; padding: 0 4px 0 1px; }
  .event b { display: block; margin: 0 -4px 0 -1px; padding-left: 2px; background: #ffad46; font-size: 7px; font-weight: 400; line-height: 7px; height: 7px; }
  .event.done { border-color: #aaa; background: #e4e4e4; color: #777; }
  .event.done b { background: #b0b0b0; text-decoration: line-through; }
  .now { position: absolute; left: 0; right: 0; top: 79px; height: 4px; background: #ff6a3c; border-bottom: 1px solid #c9703c; }

  .scroll { display: flex; flex-direction: column; background: #f6f5f0; width: 16px; min-height: 0; }
  .track { flex: 0 1 0px; }
  .arrow, .thumb { width: 15px; border: 1px solid #fff; border-radius: 3px; background: linear-gradient(90deg, #d3e0fd, #b5c9fa); box-shadow: inset 0 0 0 1px #a9bff0; flex: none; }
  .arrow { height: 16px; }
  .arrow svg { display: block; width: 13px; height: 14px; }
  .arrow path { fill: none; stroke: #4d6185; stroke-width: 2; }
  .thumb { flex: 0 0 0px; display: flex; align-items: center; justify-content: center; }
  .thumb i { width: 7px; height: 7px; background: repeating-linear-gradient(#eef4fe 0 1px, #8cb0f8 1px 2px); }

  .right { position: relative; display: flex; min-height: 0; min-width: 0; border-left: 1px solid #ccc; padding: 0 0 2px; }
  .right > :global(.scroll) { margin-top: 25px; }
  article { flex: 1; min-width: 0; display: flex; flex-direction: column; padding: 25px 16px 0 14px; }
  .sheet { position: relative; border: 1px solid #9a9ae8; border-top: 0; font-family: "Liberation Mono", monospace; font-size: 5px; line-height: 7px; color: #4a5880; overflow: hidden; }
  table { width: 100%; table-layout: fixed; border-collapse: separate; border-spacing: 0; }
  .c1 { width: 47px; } .c3 { width: 58px; } .c4 { width: 53px; } .c5 { width: 53px; }
  tr { height: 8px; }
  tbody tr:nth-child(5n) { height: 9px; }
  tbody:first-of-type .head { height: 7px; }
  th { padding: 0; background: #002255; color: #fff; font: bold 6px/6px "DejaVu Sans", sans-serif; }
  th.title { text-align: left; font: bold 7px/6px "Open Sans", "Noto Sans", sans-serif; padding-left: 1px; white-space: nowrap; }
  td { padding: 2px 0 0; line-height: 5px; border-bottom: 1px solid #d4d4d4; border-right: 1px solid #ccc; }
  td.code, td.opt { text-align: center; white-space: nowrap; }
  td.opt { color: #555; }
  td.std { background: #5a98bc; border-color: #6c9fbe; color: #fff; }
  td.hot { background: #ff0; }
  .desc div { white-space: pre; padding-left: 1px; }
  .desc b { color: #223060; }
  tr.mid { height: 14px; }
  tr.tall { height: 41px; }
  tr.tall .desc, tr.pack .desc { padding: 0; }
  tr.tall .desc div { height: 40px; line-height: 7px; }
  tr.pack { height: 21px; }
  tr.pack .desc div { height: 20px; padding-top: 2px; line-height: 6px; }
  .footnotes { padding: 8px 0 0 48px; height: 43px; line-height: 6px; white-space: pre; }
  .mark { position: absolute; font-family: "Liberation Sans", Arial, sans-serif; color: #777; opacity: .9; }
  .one { left: 0; right: 0; top: 215px; text-align: center; font-size: 31px; line-height: 36px; padding-right: 56px; }
  .two { left: 239px; bottom: 6px; font-size: 6px; }
  .four { right: 16px; bottom: 6px; font-size: 4px; }
  .break { position: absolute; border: 0 dashed #5a5ae8; }
  .across { left: 0; right: 0; bottom: 19px; border-top-width: 1px; }
  .down { top: 0; bottom: 0; right: 52px; border-left-width: 1px; }
  .caption { margin-top: 65px; font: 15px/20px "Liberation Sans", Arial, sans-serif; }
  .handle.wide { position: absolute; bottom: 0; left: 50%; margin-left: -36px; width: 70px; }

  .stats { height: 24px; flex: none; display: flex; justify-content: flex-end; gap: 13px; padding: 0 44px 0 0; border-top: 1px solid #888; background: linear-gradient(#c4c4c4, #ebebeb); }
  .stat { display: flex; align-items: center; gap: 1px; }
  .stat .ico { width: 14px; height: 14px; }
  .stat span { width: 50px; height: 21px; border-radius: 24px 3px 24px 3px / 21px 3px 21px 3px; background: linear-gradient(#3c5a3e, #58875a); box-shadow: 1px 1px 1px #555; color: #fff; font: bold 14px/20px "Liberation Sans", Arial, sans-serif; text-align: center; text-shadow: 0 1px 1px #222; }
  .stat:first-child span { width: 45px; }

  .taskbar { height: 30px; flex: none; display: flex; align-items: stretch; background: linear-gradient(#2a5cc8, #4a8af4 2px, #2a63e0 5px, #235ad8 80%, #1c45b0); color: #fff; font: 11px/16px Roboto, sans-serif; }
  .start { width: 95px; display: flex; align-items: center; gap: 4px; padding-left: 10px; border-radius: 0 9px 9px 0; background: linear-gradient(#2f7a2f, #5cb45a 3px, #3c9a3c 30%, #389438 80%, #256a25); box-shadow: inset -3px 0 4px #1f5f1f; font: italic bold 18px/24px "Open Sans", "Noto Sans", sans-serif; text-shadow: 1px 1px 1px #1a3a1a; }
  .start svg { width: 20px; height: 20px; }
  .quick { display: flex; align-items: center; gap: 7px; padding: 0 30px 0 10px; }
  .win { flex: 0 1 158px; min-width: 0; margin: 3px 2px 3px 0; display: flex; align-items: center; gap: 4px; padding: 0 4px 0 9px; border-radius: 3px; background: linear-gradient(#6ba2fa, #3f82f4 4px, #3a7af0); box-shadow: inset 0 0 1px #1c48a8; white-space: nowrap; overflow: hidden; }
  .win.active { background: #1c4fb8; box-shadow: inset 1px 1px 2px #0c2c78; }
  .lang { margin: 7px 14px 7px auto; padding: 0 4px; background: #3068d0; }
  .tray { display: flex; align-items: center; gap: 2px; padding-right: 14px; border-left: 1px solid #0c3c98; background: linear-gradient(#1a80d8, #2ab4f8 2px, #1494ec 6px, #1290e8 80%, #0c6cc0); }
  .expand { margin-left: -10px; }
  .expand svg { width: 18px; height: 18px; display: block; }
  .tray time { margin-left: 5px; }
</style>
